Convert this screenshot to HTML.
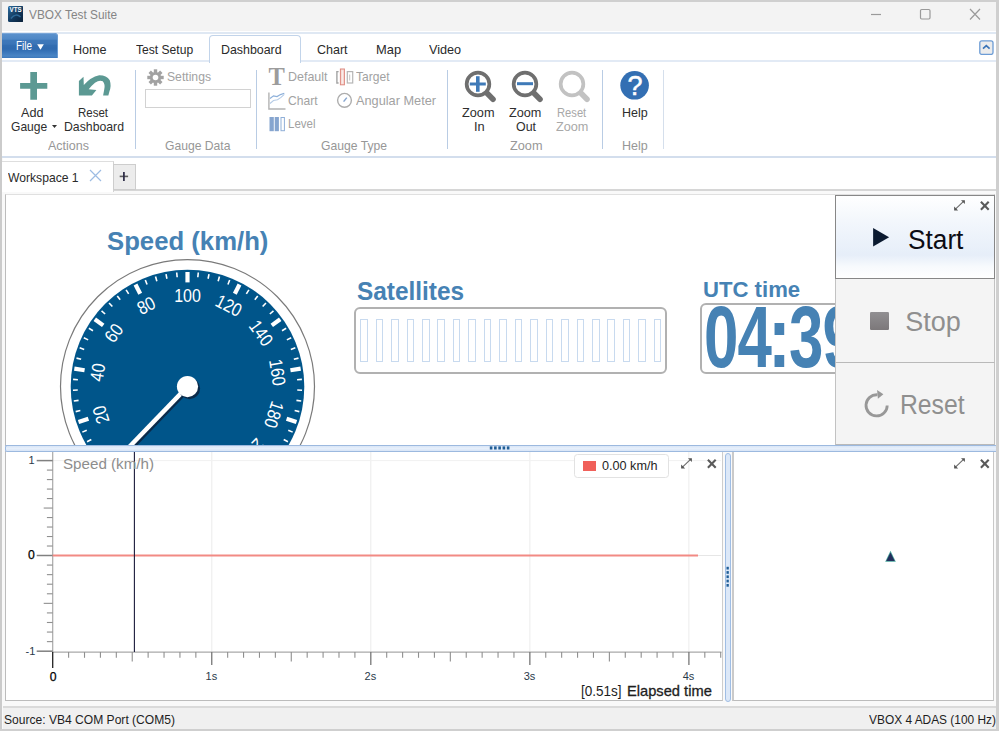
<!DOCTYPE html>
<html lang="en">
<head>
<meta charset="utf-8">
<title>VBOX Test Suite</title>
<style>
html,body{margin:0;padding:0;background:#f0f0f0;}
body{width:999px;height:731px;overflow:hidden;position:relative;font-family:"Liberation Sans",sans-serif;font-size:13px;color:#1e1e1e;}
.abs{position:absolute;}
.t{position:absolute;white-space:pre;line-height:1;transform-origin:0 0;}
#win{position:absolute;left:0;top:0;width:999px;height:731px;background:#f9f9f9;overflow:hidden;}
/* frame */
#frame-t{left:0;top:0;width:999px;height:2px;background:#cfcfcf;}
#frame-l{left:0;top:0;width:2.4px;height:731px;background:#cbcbcb;}
#frame-r{left:996px;top:0;width:3px;height:731px;background:#cfcfcf;}
#frame-b{left:0;top:729px;width:999px;height:2px;background:#cfcfcf;}
#titlebar{left:2px;top:2px;width:994px;height:29px;background:#f3f3f3;}
#tabstrip{left:2px;top:31px;width:994px;height:30px;background:#fff;}
#tabline{left:2px;top:32px;width:994px;height:2px;background:#dfe8f3;}
#ribbon{left:2px;top:60px;width:994px;height:94px;background:#fff;border-top:2px solid #e2eaf5;border-bottom:2px solid #d3deed;}
.gl{color:#8c8c8c;}
.dis{color:#9b9b9b;}
.sep{position:absolute;top:70px;width:1.1px;height:79.3px;background:#b9cce4;}
</style>
</head>
<body>
<div id="win">
<!--FRAME-->
<div class="abs" id="titlebar"></div>
<div class="abs" id="tabstrip"></div><div class="abs" id="tabline"></div>
<div class="abs" id="ribbon"></div>
<svg class="abs" style="left:7.6px;top:6px" width="15.4" height="16" viewBox="0 0 16 16" preserveAspectRatio="none">
<defs><linearGradient id="ig" x1="0" y1="0" x2="1" y2="1"><stop offset="0" stop-color="#2e6c9c"/><stop offset="0.55" stop-color="#12395e"/><stop offset="1" stop-color="#0a1f36"/></linearGradient></defs>
<rect x="0" y="0" width="16" height="16" rx="1.5" fill="url(#ig)"/>
<path d="M3 12.5 Q8 6.5 13 11" fill="none" stroke="#2f6a98" stroke-width="1.5"/>
<text x="8" y="6.2" font-family="Liberation Sans, sans-serif" font-size="6.5" font-weight="700" fill="#fff" text-anchor="middle">VTS</text>
</svg><div class="t" style="left:29.00px;top:7.87px;font-size:13.5px;color:#858585;transform:scaleX(0.8774);">VBOX Test Suite</div>
<svg class="abs" style="left:860px;top:2px" width="136" height="30" viewBox="0 0 136 30" fill="none" stroke="#9a9a9a" stroke-width="1.2">
<path d="M11 12.5 H21"/>
<rect x="60.5" y="7.5" width="9.5" height="9.5" rx="1.2"/>
<path d="M110 7 L120 17.5 M120 7 L110 17.5"/>
</svg>
<div class="abs" style="left:2.3px;top:33.3px;width:56px;height:25px;border-radius:0 4px 0 0;background:linear-gradient(#5d92cd 0%,#4f88c6 24%,#3e78ba 30%,#3b75b8 44%,#326db1 50%,#2f6aaf 64%,#3a76ba 76%,#4a85c4 92%,#3d78bb 100%);box-shadow:inset -1px 0 0 #6a9bd2, inset 0 1px 0 #79a6d8;"></div><div class="t" style="left:16.30px;top:39.74px;font-size:12px;color:#fff;transform:scaleX(0.8275);">File</div>
<svg class="abs" style="left:36.5px;top:43.5px" width="8" height="6"><path d="M0.2 0.2H6.8L3.5 5.7Z" fill="#fff"/></svg><div class="abs" style="left:209px;top:35px;width:90px;height:27px;border:1px solid #c2d4ea;border-bottom:none;border-radius:4px 4px 0 0;background:#fff;"></div><div class="t" style="left:73.20px;top:42.80px;font-size:13px;color:#2a2a2a;transform:scaleX(0.9689);">Home</div>
<div class="t" style="left:135.70px;top:42.80px;font-size:13px;color:#2a2a2a;transform:scaleX(0.9296);">Test Setup</div>
<div class="t" style="left:221.20px;top:42.80px;font-size:13px;color:#2a2a2a;transform:scaleX(0.9529);">Dashboard</div>
<div class="t" style="left:317.20px;top:42.80px;font-size:13px;color:#2a2a2a;transform:scaleX(0.9626);">Chart</div>
<div class="t" style="left:375.70px;top:42.80px;font-size:13px;color:#2a2a2a;transform:scaleX(0.9925);">Map</div>
<div class="t" style="left:428.70px;top:42.80px;font-size:13px;color:#2a2a2a;transform:scaleX(0.9723);">Video</div>
<svg class="abs" style="left:979px;top:39.5px" width="15" height="15" viewBox="0 0 15 15"><rect x="0.8" y="0.8" width="13.2" height="13.6" rx="2" fill="#ececec" stroke="#6c9cd5" stroke-width="1.3"/><path d="M4 8.7 L7.3 5.7 L10.6 8.7" fill="none" stroke="#3a74b8" stroke-width="1.7"/></svg>
<svg class="abs" style="left:15px;top:68px" width="40" height="36" viewBox="15 68 40 36"><path d="M30.3 72H37V83H47.3V88.8H37V99.8H30.3V88.8H20.1V83H30.3Z" fill="#5c9993"/></svg><div class="t" style="left:20.50px;top:105.90px;font-size:13px;color:#2e2e2e;transform:scaleX(0.9727);">Add</div>
<div class="t" style="left:10.80px;top:119.50px;font-size:13px;color:#2e2e2e;transform:scaleX(0.9274);">Gauge</div>
<svg class="abs" style="left:51.5px;top:124.8px" width="6" height="4"><path d="M0 0H5L2.5 3Z" fill="#333"/></svg><svg class="abs" style="left:70px;top:70px" width="50" height="30" viewBox="70 70 50 30"><path d="M78.9 81.1 L83.5 76.7 L83.8 85.1 Q90.5 77.2 99.2 75.3 Q106.5 75.2 109.75 80.2 Q111.6 85.8 109.4 91.4 L108.35 95.6 L103.1 95.6 L104.15 90 Q105.6 84.5 102.75 81.3 Q99.5 79.6 95 82.7 Q91 86 88.7 89.3 L96.4 90 L91.9 95.6 L78.9 95.6Z" fill="#5c9993"/></svg><div class="t" style="left:78.00px;top:105.90px;font-size:13px;color:#2e2e2e;transform:scaleX(0.8834);">Reset</div>
<div class="t" style="left:63.80px;top:119.50px;font-size:13px;color:#2e2e2e;transform:scaleX(0.9434);">Dashboard</div>
<div class="t" style="left:48.00px;top:139.00px;font-size:13px;color:#979797;transform:scaleX(0.9617);">Actions</div>
<div class="sep" style="left:135.2px"></div><svg class="abs" style="left:147px;top:69px" width="17" height="17" viewBox="-8.5 -8.5 17 17"><g fill="#a2a2a2">
<circle r="5.6"/><rect x="-1.7" y="-8.2" width="3.4" height="4" transform="rotate(0)"/><rect x="-1.7" y="-8.2" width="3.4" height="4" transform="rotate(45)"/><rect x="-1.7" y="-8.2" width="3.4" height="4" transform="rotate(90)"/><rect x="-1.7" y="-8.2" width="3.4" height="4" transform="rotate(135)"/><rect x="-1.7" y="-8.2" width="3.4" height="4" transform="rotate(180)"/><rect x="-1.7" y="-8.2" width="3.4" height="4" transform="rotate(225)"/><rect x="-1.7" y="-8.2" width="3.4" height="4" transform="rotate(270)"/><rect x="-1.7" y="-8.2" width="3.4" height="4" transform="rotate(315)"/></g><circle r="2.8" fill="#fff"/></svg><div class="t" style="left:167.00px;top:70.30px;font-size:13px;color:#a2a2a2;transform:scaleX(0.9367);">Settings</div>
<div class="abs" style="left:145px;top:89px;width:104px;height:17.2px;border:1px solid #d2d2d2;background:#fff;"></div><div class="t" style="left:164.50px;top:139.00px;font-size:13px;color:#979797;transform:scaleX(0.9343);">Gauge Data</div>
<div class="sep" style="left:255.5px"></div><div class="t" style="left:268.5px;top:64.70px;font-size:24.5px;font-weight:700;color:#9c9c9c;font-family:'Liberation Serif',serif;">T</div><div class="t" style="left:288.00px;top:70.40px;font-size:13px;color:#a2a2a2;transform:scaleX(0.9590);">Default</div>
<svg class="abs" style="left:335px;top:68px" width="20" height="19" viewBox="335 68 20 19" fill="none">
<path d="M338.6 71.6 H336.9 V83 H338.6" stroke="#a3a3a3" stroke-width="1.4"/>
<rect x="340.4" y="69" width="4" height="15.8" fill="#f7dcd8" stroke="#de8a80" stroke-width="1"/>
<path d="M342.4 70.5 V83.5" stroke="#fbefed" stroke-width="0.9"/>
<rect x="347.3" y="71.6" width="5.4" height="11.4" stroke="#b6b6b6" stroke-width="1.2"/>
<path d="M349.7 74.5 V80.5" stroke="#c4c4c4" stroke-width="1"/></svg><div class="t" style="left:356.00px;top:70.40px;font-size:13px;color:#a2a2a2;transform:scaleX(0.9272);">Target</div>
<svg class="abs" style="left:267px;top:91px" width="20" height="20" viewBox="267 91 20 20" fill="none">
<path d="M268.9 92.4 V109 H285.5" stroke="#b3b3b3" stroke-width="1.4"/>
<path d="M270 98.5 L273.5 95.8 L277 96.6 L280.5 94.6 L284.3 93.2" stroke="#8db0da" stroke-width="1.2"/>
<path d="M270 103.5 L273.5 100.5 L277.5 99.8 L281 97.4 L284.3 94.4" stroke="#b5cbe6" stroke-width="1.1"/></svg><div class="t" style="left:288.00px;top:94.40px;font-size:13px;color:#a2a2a2;transform:scaleX(0.9280);">Chart</div>
<svg class="abs" style="left:336px;top:92px" width="17" height="17" viewBox="336 92 17 17" fill="none">
<circle cx="344.5" cy="100.3" r="6.9" stroke="#adadad" stroke-width="1.4"/><path d="M343.6 101.6 L346.8 97.6" stroke="#86a5cf" stroke-width="1.5"/></svg><div class="t" style="left:356.00px;top:94.40px;font-size:13px;color:#a2a2a2;transform:scaleX(0.9798);">Angular Meter</div>
<svg class="abs" style="left:269px;top:116px" width="17" height="16" viewBox="269 116 17 16">
<rect x="269.5" y="117" width="4.3" height="14.2" fill="#86a5cf"/><rect x="274.7" y="117" width="4.2" height="14.2" fill="#86a5cf"/>
<rect x="281" y="117.5" width="3.4" height="13.2" fill="#fff" stroke="#8fafd8" stroke-width="1"/></svg><div class="t" style="left:288.00px;top:117.40px;font-size:13px;color:#a2a2a2;transform:scaleX(0.8849);">Level</div>
<div class="t" style="left:320.80px;top:139.00px;font-size:13px;color:#979797;transform:scaleX(0.9349);">Gauge Type</div>
<div class="sep" style="left:447px"></div><svg class="abs" style="left:460.3px;top:66.3px" width="40" height="40" viewBox="-18 -18 40 40" fill="none">
<path d="M8.6 8.8 L15 15.2" stroke="#6f6f6f" stroke-width="5.6" stroke-linecap="round"/>
<circle r="11.35" stroke="#6f6f6f" stroke-width="3.7" fill="#fff"/><path d="M-8.2 0H7.8" stroke="#3f7ab8" stroke-width="3"/><path d="M-0.2 -7.8V7.8" stroke="#3f7ab8" stroke-width="3.6"/></svg><svg class="abs" style="left:507.0px;top:66.3px" width="40" height="40" viewBox="-18 -18 40 40" fill="none">
<path d="M8.6 8.8 L15 15.2" stroke="#6f6f6f" stroke-width="5.6" stroke-linecap="round"/>
<circle r="11.35" stroke="#6f6f6f" stroke-width="3.7" fill="#fff"/><path d="M-8 -0.3H8" stroke="#3f7ab8" stroke-width="3"/></svg><svg class="abs" style="left:554.0px;top:66.3px" width="40" height="40" viewBox="-18 -18 40 40" fill="none">
<path d="M8.6 8.8 L15 15.2" stroke="#c2c2c2" stroke-width="5.6" stroke-linecap="round"/>
<circle r="11.35" stroke="#c2c2c2" stroke-width="3.7" fill="#fff"/></svg><div class="t" style="left:462.00px;top:105.90px;font-size:13px;color:#2e2e2e;transform:scaleX(0.9780);">Zoom</div>
<div class="t" style="left:473.80px;top:119.50px;font-size:13px;color:#2e2e2e;transform:scaleX(0.9869);">In</div>
<div class="t" style="left:508.80px;top:105.90px;font-size:13px;color:#2e2e2e;transform:scaleX(0.9750);">Zoom</div>
<div class="t" style="left:515.80px;top:119.50px;font-size:13px;color:#2e2e2e;transform:scaleX(0.9545);">Out</div>
<div class="t" style="left:557.00px;top:105.90px;font-size:13px;color:#a8a8a8;transform:scaleX(0.8598);">Reset</div>
<div class="t" style="left:555.80px;top:119.50px;font-size:13px;color:#a8a8a8;transform:scaleX(0.9750);">Zoom</div>
<div class="t" style="left:510.00px;top:139.00px;font-size:13px;color:#979797;transform:scaleX(0.9780);">Zoom</div>
<div class="sep" style="left:602px"></div><svg class="abs" style="left:619px;top:70px" width="31" height="31" viewBox="-15.5 -15.5 31 31"><circle cx="0.1" cy="-0.2" r="14.3" fill="#336fb3"/>
<text x="0.6" y="9.4" text-anchor="middle" font-family="Liberation Sans, sans-serif" font-weight="400" font-size="27" fill="#fff" stroke="#fff" stroke-width="0.5">?</text></svg><div class="t" style="left:621.80px;top:105.90px;font-size:13px;color:#2e2e2e;transform:scaleX(0.9612);">Help</div>
<div class="t" style="left:621.80px;top:139.00px;font-size:13px;color:#979797;transform:scaleX(0.9612);">Help</div>
<div class="sep" style="left:662.7px;background:#d5dfec"></div>
<div class="abs" style="left:3px;top:158px;width:993px;height:32px;background:#fff;"></div><div class="abs" style="left:113px;top:189.2px;width:883px;height:1.8px;background:#d6d6d6;"></div><div class="abs" style="left:2.4px;top:161.2px;width:110.4px;height:30px;background:#fff;border-top:1.4px solid #dedede;border-right:1.2px solid #d2d2d2;"></div><div class="t" style="left:7.90px;top:170.70px;font-size:13px;color:#2a2a2a;transform:scaleX(0.9335);">Workspace 1</div>
<svg class="abs" style="left:89px;top:169.3px" width="13" height="13" fill="none"><path d="M1 1 L12 12 M12 1 L1 12" stroke="#9dbce3" stroke-width="1.2"/></svg><div class="abs" style="left:113px;top:164px;width:21px;height:24px;background:#ececec;border:1px solid #cdcdcd;"></div><svg class="abs" style="left:119.2px;top:171.1px" width="11" height="11"><path d="M0.7 5.4H9.1" stroke="#5e5e5e" stroke-width="1.6"/><path d="M4.9 0.9V10" stroke="#2a2945" stroke-width="1.7"/></svg>
<div class="abs" style="left:5px;top:194.3px;width:989.5px;height:252px;background:#fff;border:1.2px solid #bcbcbc;border-top:1.5px solid #e0e0e0;box-sizing:border-box;"></div><div class="abs" style="left:6px;top:196px;width:988px;height:249px;overflow:hidden;"><div class="t" style="left:101.20px;top:32.91px;font-size:25.5px;color:#4682b4;font-weight:700;transform:scaleX(1.0081);">Speed (km/h)</div>
<div class="t" style="left:350.50px;top:83.44px;font-size:25px;color:#4682b4;font-weight:700;transform:scaleX(0.9756);">Satellites</div>
<div class="t" style="left:696.70px;top:82.78px;font-size:22px;color:#4682b4;font-weight:700;transform:scaleX(1.0056);">UTC time</div>
<svg class="abs" style="left:44px;top:54px" width="280" height="200" viewBox="50 250 280 200"><circle cx="187.5" cy="386.6" r="127.0" fill="#fff" stroke="#7a7a7a" stroke-width="1.2"/><circle cx="187.5" cy="386.6" r="116.8" fill="#00558a"/><line x1="187.5" y1="272.0" x2="187.5" y2="282.40000000000003" stroke="#fff" stroke-width="4.2" transform="rotate(-135.00 187.5 386.6)"/><line x1="187.5" y1="272.0" x2="187.5" y2="276.8" stroke="#fff" stroke-width="1.6" transform="rotate(-129.60 187.5 386.6)"/><line x1="187.5" y1="272.0" x2="187.5" y2="276.8" stroke="#fff" stroke-width="1.6" transform="rotate(-124.20 187.5 386.6)"/><line x1="187.5" y1="272.0" x2="187.5" y2="276.8" stroke="#fff" stroke-width="1.6" transform="rotate(-118.80 187.5 386.6)"/><line x1="187.5" y1="272.0" x2="187.5" y2="276.8" stroke="#fff" stroke-width="1.6" transform="rotate(-113.40 187.5 386.6)"/><line x1="187.5" y1="272.0" x2="187.5" y2="282.40000000000003" stroke="#fff" stroke-width="4.2" transform="rotate(-108.00 187.5 386.6)"/><line x1="187.5" y1="272.0" x2="187.5" y2="276.8" stroke="#fff" stroke-width="1.6" transform="rotate(-102.60 187.5 386.6)"/><line x1="187.5" y1="272.0" x2="187.5" y2="276.8" stroke="#fff" stroke-width="1.6" transform="rotate(-97.20 187.5 386.6)"/><line x1="187.5" y1="272.0" x2="187.5" y2="276.8" stroke="#fff" stroke-width="1.6" transform="rotate(-91.80 187.5 386.6)"/><line x1="187.5" y1="272.0" x2="187.5" y2="276.8" stroke="#fff" stroke-width="1.6" transform="rotate(-86.40 187.5 386.6)"/><line x1="187.5" y1="272.0" x2="187.5" y2="282.40000000000003" stroke="#fff" stroke-width="4.2" transform="rotate(-81.00 187.5 386.6)"/><line x1="187.5" y1="272.0" x2="187.5" y2="276.8" stroke="#fff" stroke-width="1.6" transform="rotate(-75.60 187.5 386.6)"/><line x1="187.5" y1="272.0" x2="187.5" y2="276.8" stroke="#fff" stroke-width="1.6" transform="rotate(-70.20 187.5 386.6)"/><line x1="187.5" y1="272.0" x2="187.5" y2="276.8" stroke="#fff" stroke-width="1.6" transform="rotate(-64.80 187.5 386.6)"/><line x1="187.5" y1="272.0" x2="187.5" y2="276.8" stroke="#fff" stroke-width="1.6" transform="rotate(-59.40 187.5 386.6)"/><line x1="187.5" y1="272.0" x2="187.5" y2="282.40000000000003" stroke="#fff" stroke-width="4.2" transform="rotate(-54.00 187.5 386.6)"/><line x1="187.5" y1="272.0" x2="187.5" y2="276.8" stroke="#fff" stroke-width="1.6" transform="rotate(-48.60 187.5 386.6)"/><line x1="187.5" y1="272.0" x2="187.5" y2="276.8" stroke="#fff" stroke-width="1.6" transform="rotate(-43.20 187.5 386.6)"/><line x1="187.5" y1="272.0" x2="187.5" y2="276.8" stroke="#fff" stroke-width="1.6" transform="rotate(-37.80 187.5 386.6)"/><line x1="187.5" y1="272.0" x2="187.5" y2="276.8" stroke="#fff" stroke-width="1.6" transform="rotate(-32.40 187.5 386.6)"/><line x1="187.5" y1="272.0" x2="187.5" y2="282.40000000000003" stroke="#fff" stroke-width="4.2" transform="rotate(-27.00 187.5 386.6)"/><line x1="187.5" y1="272.0" x2="187.5" y2="276.8" stroke="#fff" stroke-width="1.6" transform="rotate(-21.60 187.5 386.6)"/><line x1="187.5" y1="272.0" x2="187.5" y2="276.8" stroke="#fff" stroke-width="1.6" transform="rotate(-16.20 187.5 386.6)"/><line x1="187.5" y1="272.0" x2="187.5" y2="276.8" stroke="#fff" stroke-width="1.6" transform="rotate(-10.80 187.5 386.6)"/><line x1="187.5" y1="272.0" x2="187.5" y2="276.8" stroke="#fff" stroke-width="1.6" transform="rotate(-5.40 187.5 386.6)"/><line x1="187.5" y1="272.0" x2="187.5" y2="282.40000000000003" stroke="#fff" stroke-width="4.2" transform="rotate(0.00 187.5 386.6)"/><line x1="187.5" y1="272.0" x2="187.5" y2="276.8" stroke="#fff" stroke-width="1.6" transform="rotate(5.40 187.5 386.6)"/><line x1="187.5" y1="272.0" x2="187.5" y2="276.8" stroke="#fff" stroke-width="1.6" transform="rotate(10.80 187.5 386.6)"/><line x1="187.5" y1="272.0" x2="187.5" y2="276.8" stroke="#fff" stroke-width="1.6" transform="rotate(16.20 187.5 386.6)"/><line x1="187.5" y1="272.0" x2="187.5" y2="276.8" stroke="#fff" stroke-width="1.6" transform="rotate(21.60 187.5 386.6)"/><line x1="187.5" y1="272.0" x2="187.5" y2="282.40000000000003" stroke="#fff" stroke-width="4.2" transform="rotate(27.00 187.5 386.6)"/><line x1="187.5" y1="272.0" x2="187.5" y2="276.8" stroke="#fff" stroke-width="1.6" transform="rotate(32.40 187.5 386.6)"/><line x1="187.5" y1="272.0" x2="187.5" y2="276.8" stroke="#fff" stroke-width="1.6" transform="rotate(37.80 187.5 386.6)"/><line x1="187.5" y1="272.0" x2="187.5" y2="276.8" stroke="#fff" stroke-width="1.6" transform="rotate(43.20 187.5 386.6)"/><line x1="187.5" y1="272.0" x2="187.5" y2="276.8" stroke="#fff" stroke-width="1.6" transform="rotate(48.60 187.5 386.6)"/><line x1="187.5" y1="272.0" x2="187.5" y2="282.40000000000003" stroke="#fff" stroke-width="4.2" transform="rotate(54.00 187.5 386.6)"/><line x1="187.5" y1="272.0" x2="187.5" y2="276.8" stroke="#fff" stroke-width="1.6" transform="rotate(59.40 187.5 386.6)"/><line x1="187.5" y1="272.0" x2="187.5" y2="276.8" stroke="#fff" stroke-width="1.6" transform="rotate(64.80 187.5 386.6)"/><line x1="187.5" y1="272.0" x2="187.5" y2="276.8" stroke="#fff" stroke-width="1.6" transform="rotate(70.20 187.5 386.6)"/><line x1="187.5" y1="272.0" x2="187.5" y2="276.8" stroke="#fff" stroke-width="1.6" transform="rotate(75.60 187.5 386.6)"/><line x1="187.5" y1="272.0" x2="187.5" y2="282.40000000000003" stroke="#fff" stroke-width="4.2" transform="rotate(81.00 187.5 386.6)"/><line x1="187.5" y1="272.0" x2="187.5" y2="276.8" stroke="#fff" stroke-width="1.6" transform="rotate(86.40 187.5 386.6)"/><line x1="187.5" y1="272.0" x2="187.5" y2="276.8" stroke="#fff" stroke-width="1.6" transform="rotate(91.80 187.5 386.6)"/><line x1="187.5" y1="272.0" x2="187.5" y2="276.8" stroke="#fff" stroke-width="1.6" transform="rotate(97.20 187.5 386.6)"/><line x1="187.5" y1="272.0" x2="187.5" y2="276.8" stroke="#fff" stroke-width="1.6" transform="rotate(102.60 187.5 386.6)"/><line x1="187.5" y1="272.0" x2="187.5" y2="282.40000000000003" stroke="#fff" stroke-width="4.2" transform="rotate(108.00 187.5 386.6)"/><line x1="187.5" y1="272.0" x2="187.5" y2="276.8" stroke="#fff" stroke-width="1.6" transform="rotate(113.40 187.5 386.6)"/><line x1="187.5" y1="272.0" x2="187.5" y2="276.8" stroke="#fff" stroke-width="1.6" transform="rotate(118.80 187.5 386.6)"/><line x1="187.5" y1="272.0" x2="187.5" y2="276.8" stroke="#fff" stroke-width="1.6" transform="rotate(124.20 187.5 386.6)"/><line x1="187.5" y1="272.0" x2="187.5" y2="276.8" stroke="#fff" stroke-width="1.6" transform="rotate(129.60 187.5 386.6)"/><line x1="187.5" y1="272.0" x2="187.5" y2="282.40000000000003" stroke="#fff" stroke-width="4.2" transform="rotate(135.00 187.5 386.6)"/><g transform="rotate(-135.00 187.5 386.6)"><text x="187.5" y="302.0" text-anchor="middle" font-family="Liberation Sans, sans-serif" font-size="18.6" fill="#fff" transform="translate(187.5 0) scale(0.86 1) translate(-187.5 0)">0</text></g><g transform="rotate(-108.00 187.5 386.6)"><text x="187.5" y="302.0" text-anchor="middle" font-family="Liberation Sans, sans-serif" font-size="18.6" fill="#fff" transform="translate(187.5 0) scale(0.86 1) translate(-187.5 0)">20</text></g><g transform="rotate(-81.00 187.5 386.6)"><text x="187.5" y="302.0" text-anchor="middle" font-family="Liberation Sans, sans-serif" font-size="18.6" fill="#fff" transform="translate(187.5 0) scale(0.86 1) translate(-187.5 0)">40</text></g><g transform="rotate(-54.00 187.5 386.6)"><text x="187.5" y="302.0" text-anchor="middle" font-family="Liberation Sans, sans-serif" font-size="18.6" fill="#fff" transform="translate(187.5 0) scale(0.86 1) translate(-187.5 0)">60</text></g><g transform="rotate(-27.00 187.5 386.6)"><text x="187.5" y="302.0" text-anchor="middle" font-family="Liberation Sans, sans-serif" font-size="18.6" fill="#fff" transform="translate(187.5 0) scale(0.86 1) translate(-187.5 0)">80</text></g><g transform="rotate(0.00 187.5 386.6)"><text x="187.5" y="302.0" text-anchor="middle" font-family="Liberation Sans, sans-serif" font-size="18.6" fill="#fff" transform="translate(187.5 0) scale(0.86 1) translate(-187.5 0)">100</text></g><g transform="rotate(27.00 187.5 386.6)"><text x="187.5" y="302.0" text-anchor="middle" font-family="Liberation Sans, sans-serif" font-size="18.6" fill="#fff" transform="translate(187.5 0) scale(0.86 1) translate(-187.5 0)">120</text></g><g transform="rotate(54.00 187.5 386.6)"><text x="187.5" y="302.0" text-anchor="middle" font-family="Liberation Sans, sans-serif" font-size="18.6" fill="#fff" transform="translate(187.5 0) scale(0.86 1) translate(-187.5 0)">140</text></g><g transform="rotate(81.00 187.5 386.6)"><text x="187.5" y="302.0" text-anchor="middle" font-family="Liberation Sans, sans-serif" font-size="18.6" fill="#fff" transform="translate(187.5 0) scale(0.86 1) translate(-187.5 0)">160</text></g><g transform="rotate(108.00 187.5 386.6)"><text x="187.5" y="302.0" text-anchor="middle" font-family="Liberation Sans, sans-serif" font-size="18.6" fill="#fff" transform="translate(187.5 0) scale(0.86 1) translate(-187.5 0)">180</text></g><g transform="rotate(135.00 187.5 386.6)"><text x="187.5" y="302.0" text-anchor="middle" font-family="Liberation Sans, sans-serif" font-size="18.6" fill="#fff" transform="translate(187.5 0) scale(0.86 1) translate(-187.5 0)">200</text></g><g transform="rotate(-136 187.5 386.6)"><rect x="185.3" y="274.6" width="4.4" height="112" fill="#0a2a4a" transform="translate(-2.4 0)"/><rect x="185.3" y="274.6" width="4.4" height="112" fill="#fff"/></g><circle cx="189.5" cy="388.6" r="10.6" fill="#0a2a4a"/><circle cx="187.5" cy="386.6" r="10.6" fill="#fff"/></svg><div class="abs" style="left:348.1px;top:110.60000000000002px;width:312.8px;height:67.6px;box-sizing:border-box;border:2px solid #b1b1b1;border-radius:6px;background:#fff;"></div><div class="abs" style="left:354.20px;top:123px;width:7.6px;height:42.5px;box-sizing:border-box;border:1px solid #c8daef;"></div><div class="abs" style="left:369.65px;top:123px;width:7.6px;height:42.5px;box-sizing:border-box;border:1px solid #c8daef;"></div><div class="abs" style="left:385.10px;top:123px;width:7.6px;height:42.5px;box-sizing:border-box;border:1px solid #c8daef;"></div><div class="abs" style="left:400.55px;top:123px;width:7.6px;height:42.5px;box-sizing:border-box;border:1px solid #c8daef;"></div><div class="abs" style="left:416.00px;top:123px;width:7.6px;height:42.5px;box-sizing:border-box;border:1px solid #c8daef;"></div><div class="abs" style="left:431.45px;top:123px;width:7.6px;height:42.5px;box-sizing:border-box;border:1px solid #c8daef;"></div><div class="abs" style="left:446.90px;top:123px;width:7.6px;height:42.5px;box-sizing:border-box;border:1px solid #c8daef;"></div><div class="abs" style="left:462.35px;top:123px;width:7.6px;height:42.5px;box-sizing:border-box;border:1px solid #c8daef;"></div><div class="abs" style="left:477.80px;top:123px;width:7.6px;height:42.5px;box-sizing:border-box;border:1px solid #c8daef;"></div><div class="abs" style="left:493.25px;top:123px;width:7.6px;height:42.5px;box-sizing:border-box;border:1px solid #c8daef;"></div><div class="abs" style="left:508.70px;top:123px;width:7.6px;height:42.5px;box-sizing:border-box;border:1px solid #c8daef;"></div><div class="abs" style="left:524.15px;top:123px;width:7.6px;height:42.5px;box-sizing:border-box;border:1px solid #c8daef;"></div><div class="abs" style="left:539.60px;top:123px;width:7.6px;height:42.5px;box-sizing:border-box;border:1px solid #c8daef;"></div><div class="abs" style="left:555.05px;top:123px;width:7.6px;height:42.5px;box-sizing:border-box;border:1px solid #c8daef;"></div><div class="abs" style="left:570.50px;top:123px;width:7.6px;height:42.5px;box-sizing:border-box;border:1px solid #c8daef;"></div><div class="abs" style="left:585.95px;top:123px;width:7.6px;height:42.5px;box-sizing:border-box;border:1px solid #c8daef;"></div><div class="abs" style="left:601.40px;top:123px;width:7.6px;height:42.5px;box-sizing:border-box;border:1px solid #c8daef;"></div><div class="abs" style="left:616.85px;top:123px;width:7.6px;height:42.5px;box-sizing:border-box;border:1px solid #c8daef;"></div><div class="abs" style="left:632.30px;top:123px;width:7.6px;height:42.5px;box-sizing:border-box;border:1px solid #c8daef;"></div><div class="abs" style="left:647.75px;top:123px;width:7.6px;height:42.5px;box-sizing:border-box;border:1px solid #c8daef;"></div><div class="abs" style="left:694.2px;top:107.39999999999998px;width:160px;height:70.3px;box-sizing:border-box;border:2px solid #b1b1b1;border-radius:6px;background:#fff;"></div><div class="t" style="left:698.1px;top:98.25px;font-size:60px;font-weight:700;color:#4682b4;letter-spacing:-0.9px;transform:scale(1.03,1.46);">04</div><div class="t" style="left:761.9px;top:98.25px;font-size:60px;font-weight:700;color:#4682b4;letter-spacing:-0.9px;transform:scale(1.14,1.46);">:</div><div class="t" style="left:783px;top:98.25px;font-size:60px;font-weight:700;color:#4682b4;letter-spacing:-0.9px;transform:scale(1.03,1.46);">39</div><div class="t" style="left:846px;top:98.25px;font-size:60px;font-weight:700;color:#4682b4;letter-spacing:-0.9px;transform:scale(1.14,1.46);">:</div><div class="t" style="left:867px;top:98.25px;font-size:60px;font-weight:700;color:#4682b4;letter-spacing:-0.9px;transform:scale(1.03,1.46);">17</div></div><div class="abs" style="left:835.4px;top:195px;width:159.4px;height:250px;background:#f4f4f4;"></div><div class="abs" style="left:835.4px;top:195px;width:159.4px;height:84px;box-sizing:border-box;border:1.2px solid #878787;background:linear-gradient(#ffffff 0%,#f3f7fc 30%,#e6eef9 72%,#f7fafd 86%,#ffffff 100%);"></div><div class="abs" style="left:835.4px;top:279px;width:159.4px;height:84px;box-sizing:border-box;border:1.2px solid #c2c2c2;border-bottom:1.8px solid #b9b9b9;border-top:none;background:#f4f4f4;"></div><div class="abs" style="left:835.4px;top:363px;width:159.4px;height:82px;box-sizing:border-box;border:1.2px solid #c2c2c2;border-bottom:1px solid #b9b9b9;border-top:none;background:#f4f4f4;"></div><svg class="abs" style="left:872px;top:227px" width="19" height="21"><path d="M1.1 1.1 L17.1 10.3 L1.1 19.5Z" fill="#0b1a30"/></svg><div class="t" style="left:908.20px;top:226.64px;font-size:27px;color:#0c0c14;transform:scaleX(0.9716);">Start</div>
<div class="abs" style="left:870px;top:312px;width:18.5px;height:17.8px;border-radius:1.2px;background:linear-gradient(#918f92,#7c787a);"></div><div class="t" style="left:905.20px;top:309.14px;font-size:27px;color:#8f8f8f;">Stop</div>
<svg class="abs" style="left:860px;top:386.7px" width="34" height="34" viewBox="860 386 34 34" fill="none"><path d="M887.2 404.4 A10.6 10.6 0 1 1 877.5 393.8" stroke="#989898" stroke-width="2.8"/><path d="M883.4 393.2 L877.1 389 L877.9 397.8Z" fill="#989898"/></svg><div class="t" style="left:899.60px;top:392.44px;font-size:27px;color:#8f8f8f;transform:scaleX(0.9159);">Reset</div>
<svg class="abs" style="left:953px;top:198px" width="40" height="15" viewBox="0 0 40 15" fill="none">
<path d="M2.2 11.4 L10.8 3.2" stroke="#6a6a6a" stroke-width="1.1"/><path d="M8 2.2 H11.9 V6.1Z" fill="#555"/><path d="M1.1 8.4 V12.4 H5.1Z" fill="#555"/>
<path d="M27.9 3.7 L35.7 11.7 M35.7 3.7 L27.9 11.7" stroke="#5a5a5a" stroke-width="2.1"/></svg>
<div class="abs" style="left:5px;top:445px;width:991px;height:6.8px;z-index:3;box-sizing:border-box;background:linear-gradient(#d9e6f7,#e6effb 50%,#d7e4f6);border:1.5px solid #9cb9df;border-left-width:1px;border-right:none;border-radius:2px 0 0 2px;"></div><svg class="abs" style="left:489px;top:446px;z-index:4" width="22" height="5"><rect x="0.80" y="0.4" width="2.6" height="3.1" fill="#1f5d96"/><rect x="5.06" y="0.4" width="2.6" height="3.1" fill="#1f5d96"/><rect x="9.32" y="0.4" width="2.6" height="3.1" fill="#1f5d96"/><rect x="13.58" y="0.4" width="2.6" height="3.1" fill="#1f5d96"/><rect x="17.84" y="0.4" width="2.6" height="3.1" fill="#1f5d96"/></svg><div class="abs" style="left:5px;top:451px;width:718.3px;height:250.3px;box-sizing:border-box;background:#fff;border:1.2px solid #bcbcbc;border-right-color:#cdcdcd;border-top:none;"></div><div class="abs" style="left:725px;top:452.8px;width:5.6px;height:249px;box-sizing:border-box;background:#dce8f8;border:1.2px solid #9fbde4;border-radius:3px;"></div><svg class="abs" style="left:725.6px;top:566px;z-index:4" width="4" height="24"><rect x="0.5" y="0.8" width="2.3" height="2.7" fill="#1f5d96"/><rect x="0.5" y="5.1" width="2.3" height="2.7" fill="#1f5d96"/><rect x="0.5" y="9.4" width="2.3" height="2.7" fill="#1f5d96"/><rect x="0.5" y="13.7" width="2.3" height="2.7" fill="#1f5d96"/><rect x="0.5" y="18.0" width="2.3" height="2.7" fill="#1f5d96"/></svg><div class="abs" style="left:732.1px;top:451px;width:262.2px;height:250.3px;box-sizing:border-box;background:#fff;border:1.2px solid #bcbcbc;border-left:2.8px solid #cacaca;border-right-color:#c8c8c8;border-top:none;"></div><svg class="abs" style="left:883px;top:549px" width="15" height="15" viewBox="883 549 15 15"><path d="M890.5 550.8 L895.8 561.7 H885.2Z" fill="#49a69d"/><path d="M890.5 552.5 L894.7 560.9 H886.3Z" fill="#232f5c"/></svg><svg class="abs" style="left:0;top:451px" width="724" height="250" viewBox="0 451 724 250" fill="none" font-family="Liberation Sans, sans-serif"><line x1="211.8" y1="452" x2="211.8" y2="652.1" stroke="#ececec" stroke-width="1"/><line x1="370.8" y1="452" x2="370.8" y2="652.1" stroke="#ececec" stroke-width="1"/><line x1="529.9" y1="452" x2="529.9" y2="652.1" stroke="#ececec" stroke-width="1"/><line x1="688.9" y1="452" x2="688.9" y2="652.1" stroke="#ececec" stroke-width="1"/><line x1="52.7" y1="460.6" x2="721" y2="460.6" stroke="#f1f1f1" stroke-width="1"/><line x1="52.7" y1="555.5" x2="721" y2="555.5" stroke="#e6e6e6" stroke-width="1"/><line x1="52.7" y1="452" x2="52.7" y2="652.1" stroke="#a9a9a9" stroke-width="1.2"/><line x1="52.1" y1="652.1" x2="721.5" y2="652.1" stroke="#a9a9a9" stroke-width="1.3"/><line x1="36.7" y1="460.60" x2="52.7" y2="460.60" stroke="#808080" stroke-width="1.5"/><line x1="46.900000000000006" y1="470.09" x2="52.7" y2="470.09" stroke="#8f8f8f" stroke-width="1.1"/><line x1="46.900000000000006" y1="479.58" x2="52.7" y2="479.58" stroke="#8f8f8f" stroke-width="1.1"/><line x1="46.900000000000006" y1="489.07" x2="52.7" y2="489.07" stroke="#8f8f8f" stroke-width="1.1"/><line x1="46.900000000000006" y1="498.56" x2="52.7" y2="498.56" stroke="#8f8f8f" stroke-width="1.1"/><line x1="43.7" y1="508.05" x2="52.7" y2="508.05" stroke="#8f8f8f" stroke-width="1.1"/><line x1="46.900000000000006" y1="517.54" x2="52.7" y2="517.54" stroke="#8f8f8f" stroke-width="1.1"/><line x1="46.900000000000006" y1="527.03" x2="52.7" y2="527.03" stroke="#8f8f8f" stroke-width="1.1"/><line x1="46.900000000000006" y1="536.52" x2="52.7" y2="536.52" stroke="#8f8f8f" stroke-width="1.1"/><line x1="46.900000000000006" y1="546.01" x2="52.7" y2="546.01" stroke="#8f8f8f" stroke-width="1.1"/><line x1="36.7" y1="555.50" x2="52.7" y2="555.50" stroke="#808080" stroke-width="1.5"/><line x1="46.900000000000006" y1="565.07" x2="52.7" y2="565.07" stroke="#8f8f8f" stroke-width="1.1"/><line x1="46.900000000000006" y1="574.64" x2="52.7" y2="574.64" stroke="#8f8f8f" stroke-width="1.1"/><line x1="46.900000000000006" y1="584.21" x2="52.7" y2="584.21" stroke="#8f8f8f" stroke-width="1.1"/><line x1="46.900000000000006" y1="593.78" x2="52.7" y2="593.78" stroke="#8f8f8f" stroke-width="1.1"/><line x1="43.7" y1="603.35" x2="52.7" y2="603.35" stroke="#8f8f8f" stroke-width="1.1"/><line x1="46.900000000000006" y1="612.92" x2="52.7" y2="612.92" stroke="#8f8f8f" stroke-width="1.1"/><line x1="46.900000000000006" y1="622.49" x2="52.7" y2="622.49" stroke="#8f8f8f" stroke-width="1.1"/><line x1="46.900000000000006" y1="632.06" x2="52.7" y2="632.06" stroke="#8f8f8f" stroke-width="1.1"/><line x1="46.900000000000006" y1="641.63" x2="52.7" y2="641.63" stroke="#8f8f8f" stroke-width="1.1"/><line x1="36.7" y1="651.20" x2="52.7" y2="651.20" stroke="#808080" stroke-width="1.5"/><line x1="52.70" y1="652.1" x2="52.70" y2="668" stroke="#222" stroke-width="1.3"/><line x1="68.61" y1="652.1" x2="68.61" y2="657.8" stroke="#8f8f8f" stroke-width="1.1"/><line x1="84.51" y1="652.1" x2="84.51" y2="657.8" stroke="#8f8f8f" stroke-width="1.1"/><line x1="100.42" y1="652.1" x2="100.42" y2="657.8" stroke="#8f8f8f" stroke-width="1.1"/><line x1="116.32" y1="652.1" x2="116.32" y2="657.8" stroke="#8f8f8f" stroke-width="1.1"/><line x1="132.23" y1="652.1" x2="132.23" y2="661.5" stroke="#8f8f8f" stroke-width="1.1"/><line x1="148.13" y1="652.1" x2="148.13" y2="657.8" stroke="#8f8f8f" stroke-width="1.1"/><line x1="164.04" y1="652.1" x2="164.04" y2="657.8" stroke="#8f8f8f" stroke-width="1.1"/><line x1="179.94" y1="652.1" x2="179.94" y2="657.8" stroke="#8f8f8f" stroke-width="1.1"/><line x1="195.85" y1="652.1" x2="195.85" y2="657.8" stroke="#8f8f8f" stroke-width="1.1"/><line x1="211.75" y1="652.1" x2="211.75" y2="665" stroke="#777" stroke-width="1.3"/><line x1="227.66" y1="652.1" x2="227.66" y2="657.8" stroke="#8f8f8f" stroke-width="1.1"/><line x1="243.56" y1="652.1" x2="243.56" y2="657.8" stroke="#8f8f8f" stroke-width="1.1"/><line x1="259.47" y1="652.1" x2="259.47" y2="657.8" stroke="#8f8f8f" stroke-width="1.1"/><line x1="275.37" y1="652.1" x2="275.37" y2="657.8" stroke="#8f8f8f" stroke-width="1.1"/><line x1="291.27" y1="652.1" x2="291.27" y2="661.5" stroke="#8f8f8f" stroke-width="1.1"/><line x1="307.18" y1="652.1" x2="307.18" y2="657.8" stroke="#8f8f8f" stroke-width="1.1"/><line x1="323.09" y1="652.1" x2="323.09" y2="657.8" stroke="#8f8f8f" stroke-width="1.1"/><line x1="338.99" y1="652.1" x2="338.99" y2="657.8" stroke="#8f8f8f" stroke-width="1.1"/><line x1="354.90" y1="652.1" x2="354.90" y2="657.8" stroke="#8f8f8f" stroke-width="1.1"/><line x1="370.80" y1="652.1" x2="370.80" y2="665" stroke="#777" stroke-width="1.3"/><line x1="386.70" y1="652.1" x2="386.70" y2="657.8" stroke="#8f8f8f" stroke-width="1.1"/><line x1="402.61" y1="652.1" x2="402.61" y2="657.8" stroke="#8f8f8f" stroke-width="1.1"/><line x1="418.51" y1="652.1" x2="418.51" y2="657.8" stroke="#8f8f8f" stroke-width="1.1"/><line x1="434.42" y1="652.1" x2="434.42" y2="657.8" stroke="#8f8f8f" stroke-width="1.1"/><line x1="450.33" y1="652.1" x2="450.33" y2="661.5" stroke="#8f8f8f" stroke-width="1.1"/><line x1="466.23" y1="652.1" x2="466.23" y2="657.8" stroke="#8f8f8f" stroke-width="1.1"/><line x1="482.14" y1="652.1" x2="482.14" y2="657.8" stroke="#8f8f8f" stroke-width="1.1"/><line x1="498.04" y1="652.1" x2="498.04" y2="657.8" stroke="#8f8f8f" stroke-width="1.1"/><line x1="513.95" y1="652.1" x2="513.95" y2="657.8" stroke="#8f8f8f" stroke-width="1.1"/><line x1="529.85" y1="652.1" x2="529.85" y2="665" stroke="#777" stroke-width="1.3"/><line x1="545.75" y1="652.1" x2="545.75" y2="657.8" stroke="#8f8f8f" stroke-width="1.1"/><line x1="561.66" y1="652.1" x2="561.66" y2="657.8" stroke="#8f8f8f" stroke-width="1.1"/><line x1="577.57" y1="652.1" x2="577.57" y2="657.8" stroke="#8f8f8f" stroke-width="1.1"/><line x1="593.47" y1="652.1" x2="593.47" y2="657.8" stroke="#8f8f8f" stroke-width="1.1"/><line x1="609.38" y1="652.1" x2="609.38" y2="661.5" stroke="#8f8f8f" stroke-width="1.1"/><line x1="625.28" y1="652.1" x2="625.28" y2="657.8" stroke="#8f8f8f" stroke-width="1.1"/><line x1="641.19" y1="652.1" x2="641.19" y2="657.8" stroke="#8f8f8f" stroke-width="1.1"/><line x1="657.09" y1="652.1" x2="657.09" y2="657.8" stroke="#8f8f8f" stroke-width="1.1"/><line x1="673.00" y1="652.1" x2="673.00" y2="657.8" stroke="#8f8f8f" stroke-width="1.1"/><line x1="688.90" y1="652.1" x2="688.90" y2="665" stroke="#777" stroke-width="1.3"/><line x1="704.81" y1="652.1" x2="704.81" y2="657.8" stroke="#8f8f8f" stroke-width="1.1"/><line x1="720.71" y1="652.1" x2="720.71" y2="657.8" stroke="#8f8f8f" stroke-width="1.1"/><line x1="52.7" y1="555.5" x2="698" y2="555.5" stroke="#f28a84" stroke-width="2"/><line x1="134.4" y1="452" x2="134.4" y2="652.1" stroke="#1b1b3a" stroke-width="1.1"/></svg><div class="t" style="left:28.60px;top:455.29px;font-size:11px;color:#2a3a4a;">1</div>
<div class="t" style="left:28.10px;top:549.37px;font-size:12.2px;color:#000;-webkit-text-stroke:0.25px #000;">0</div>
<div class="t" style="left:25.50px;top:646.19px;font-size:11px;color:#2a3a4a;">-1</div>
<div class="t" style="left:49.70px;top:670.87px;font-size:12.2px;color:#000;-webkit-text-stroke:0.25px #000;">0</div>
<div class="t" style="left:205.55px;top:671.29px;font-size:11px;color:#2a3a4a;">1s</div>
<div class="t" style="left:364.60px;top:671.29px;font-size:11px;color:#2a3a4a;">2s</div>
<div class="t" style="left:523.65px;top:671.29px;font-size:11px;color:#2a3a4a;">3s</div>
<div class="t" style="left:682.70px;top:671.29px;font-size:11px;color:#2a3a4a;">4s</div>
<div class="t" style="left:62.50px;top:456.73px;font-size:14.5px;color:#8d8d8d;transform:scaleX(1.0455);">Speed (km/h)</div>
<div class="t" style="left:581.00px;top:684.03px;font-size:14.5px;color:#1e1e1e;transform:scaleX(0.9327);">[0.51s]</div>
<div class="t" style="left:627.00px;top:684.03px;font-size:14.5px;color:#1e1e1e;transform:scaleX(1.0117);-webkit-text-stroke:0.3px #1e1e1e;">Elapsed time</div>
<div class="abs" style="left:573.5px;top:453.8px;width:95px;height:24px;box-sizing:border-box;border:1px solid #e2e2e2;border-radius:3.5px;background:#fff;"></div><div class="abs" style="left:583px;top:460.5px;width:13px;height:10px;background:#f0605a;"></div><div class="t" style="left:601.50px;top:460.14px;font-size:12px;color:#1e1e1e;transform:scaleX(1.0533);">0.00 km/h</div>
<svg class="abs" style="left:680px;top:456.1px" width="40" height="15" viewBox="0 0 40 15" fill="none">
<path d="M2.2 11.4 L10.8 3.2" stroke="#6a6a6a" stroke-width="1.1"/><path d="M8 2.2 H11.9 V6.1Z" fill="#555"/><path d="M1.1 8.4 V12.4 H5.1Z" fill="#555"/>
<path d="M27.9 3.7 L35.7 11.7 M35.7 3.7 L27.9 11.7" stroke="#5a5a5a" stroke-width="2.1"/></svg><svg class="abs" style="left:953px;top:456.1px" width="40" height="15" viewBox="0 0 40 15" fill="none">
<path d="M2.2 11.4 L10.8 3.2" stroke="#6a6a6a" stroke-width="1.1"/><path d="M8 2.2 H11.9 V6.1Z" fill="#555"/><path d="M1.1 8.4 V12.4 H5.1Z" fill="#555"/>
<path d="M27.9 3.7 L35.7 11.7 M35.7 3.7 L27.9 11.7" stroke="#5a5a5a" stroke-width="2.1"/></svg>
<div class="abs" style="left:3px;top:706px;width:993px;height:2px;background:#dadada;"></div><div class="abs" style="left:3px;top:708px;width:993px;height:21px;background:#f0f0f0;"></div><div class="t" style="left:3.50px;top:713.40px;font-size:13px;color:#1e1e1e;transform:scaleX(0.9283);">Source: VB4 COM Port (COM5)</div>
<div class="t" style="left:869.00px;top:713.40px;font-size:13px;color:#1e1e1e;transform:scaleX(0.9155);">VBOX 4 ADAS (100 Hz)</div>

<div class="abs" id="frame-t"></div><div class="abs" id="frame-l"></div><div class="abs" id="frame-r"></div><div class="abs" id="frame-b"></div>
</div>
</body>
</html>
